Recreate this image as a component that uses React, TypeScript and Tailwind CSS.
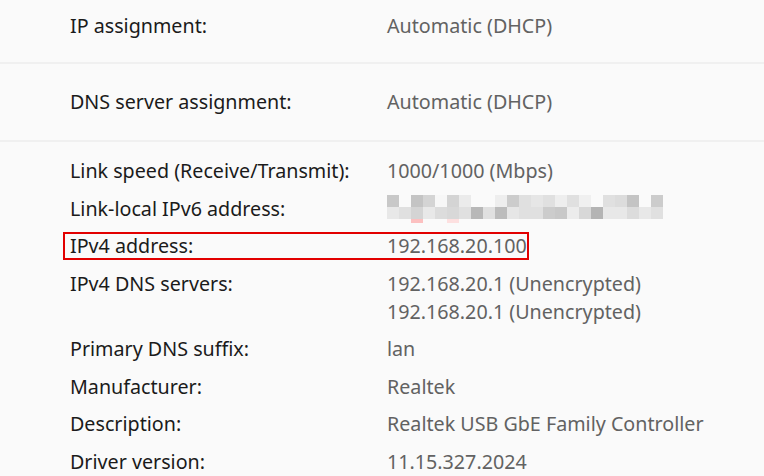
import React from 'react';

const topRows = [
  { label: 'IP assignment:', value: 'Automatic (DHCP)' },
  { label: 'DNS server assignment:', value: 'Automatic (DHCP)' },
];

// pixelated (blurred-out) IPv6 address, 12px blocks
const mosaic: string[][] = [
  ['#c8c8c8', '#fafafa', '#c4c4c4', '#d4d4d4', '#f7f7f7', '#d4d4d4', '#ebebeb', '#fafafa', '#fafafa', '#eeeeee', '#cccccc', '#e0e0e0', '#e6e6e6', '#e0e0e0', '#eeeeee', '#e0e0e0', '#f0f0f0', '#fafafa', '#e0e0e0', '#dcdcdc', '#c4c4c4', '#fafafa', '#cccccc'],
  ['#e8e8e8', '#e0e0e0', '#d4d4d4', '#e8e8e8', '#dcdcdc', '#d8d8d8', '#e0e0e0', '#b8b8b8', '#e0e0e0', '#bcbcbc', '#e6e6e6', '#e0e0e0', '#e0e0e0', '#cccccc', '#c8c8c8', '#ececec', '#d8d8d8', '#b4b4b4', '#e8e8e8', '#e8e8e8', '#dcdcdc', '#e8e8e8', '#e0e0e0'],
  ['#fafafa', '#fafafa', '#fcc0c0', '#fafafa', '#fafafa', '#fde0e0', '#fafafa', '#fafafa', '#fafafa', '#fafafa', '#fafafa', '#fafafa', '#fafafa', '#fafafa', '#fafafa', '#fafafa', '#fafafa', '#fafafa', '#fafafa', '#fafafa', '#fafafa', '#fafafa', '#fafafa'],
];

const Mosaic = () => (
  <svg width={276} height={28} className="block">
    {mosaic.map((row, r) =>
      row.map((c, i) => (
        <rect key={`${r}-${i}`} x={i * 12} y={r * 12} width={12} height={r === 2 ? 4 : 12} fill={c} />
      ))
    )}
  </svg>
);

const details: { label: string; value: React.ReactNode; highlight?: boolean }[] = [
  { label: 'Link speed (Receive/Transmit):', value: '1000/1000 (Mbps)' },
  { label: 'Link-local IPv6 address:', value: <Mosaic /> },
  { label: 'IPv4 address:', value: '192.168.20.100', highlight: true },
  {
    label: 'IPv4 DNS servers:',
    value: (
      <>
        <div>192.168.20.1 (Unencrypted)</div>
        <div>192.168.20.1 (Unencrypted)</div>
      </>
    ),
  },
  { label: 'Primary DNS suffix:', value: 'lan' },
  { label: 'Manufacturer:', value: 'Realtek' },
  { label: 'Description:', value: 'Realtek USB GbE Family Controller' },
  { label: 'Driver version:', value: '11.15.327.2024' },
];

export default function App() {
  return (
    <div
      className="w-[764px] h-[476px] overflow-hidden bg-[#fafafa] text-[19.7px] leading-[28px]"
      style={{ fontFamily: '"Noto Sans", "Open Sans", sans-serif' }}
    >
      {topRows.map((r, i) => (
        <div
          key={r.label}
          className={`flex items-center pl-[70px] border-b-2 border-[#f0f0f0] ${i === 0 ? 'h-[64px] pb-[10px]' : 'h-[78px]'}`}
        >
          <div className="w-[317px] text-[#1b1b1b]">{r.label}</div>
          <div className="text-[#626262]">{r.value}</div>
        </div>
      ))}

      <div className="flex flex-col gap-[9.5px] pt-[15px] pl-[70px]">
        {details.map((d) => (
          <div key={d.label} className="relative flex">
            <div className="w-[317px] shrink-0 text-[#1b1b1b]">{d.label}</div>
            <div className="text-[#626262]">{d.value}</div>
            {d.highlight && (
              <div className="absolute left-[-7px] top-0 w-[466px] h-[28px] border-2 border-[#e20000]" />
            )}
          </div>
        ))}
      </div>
    </div>
  );
}
